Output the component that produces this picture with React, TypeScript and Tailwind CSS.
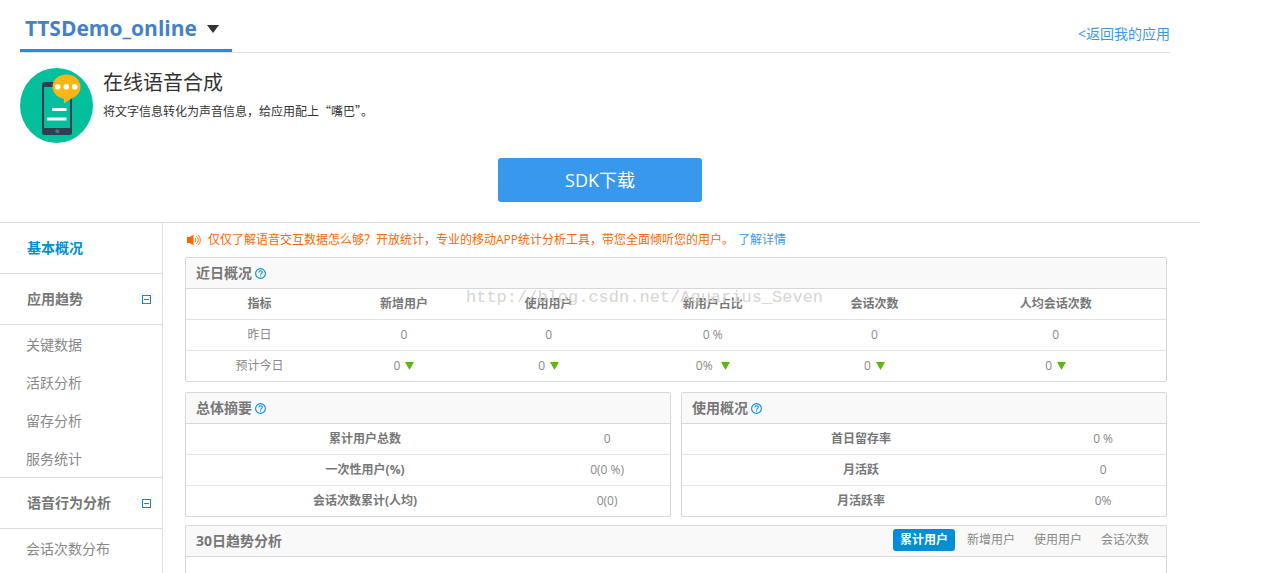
import { useState } from "react";

type Metric = {
  name: string;
  yesterday: string;
  today: string;
};

type SummaryRow = {
  label: string;
  value: string;
};

const metrics: Metric[] = [
  { name: "新增用户", yesterday: "0", today: "0" },
  { name: "使用用户", yesterday: "0", today: "0" },
  { name: "新用户占比", yesterday: "0 %", today: "0% " },
  { name: "会话次数", yesterday: "0", today: "0" },
  { name: "人均会话次数", yesterday: "0", today: "0" },
];

const totals: SummaryRow[] = [
  { label: "累计用户总数", value: "0" },
  { label: "一次性用户(%)", value: "0(0 %)" },
  { label: "会话次数累计(人均)", value: "0(0)" },
];

const usage: SummaryRow[] = [
  { label: "首日留存率", value: "0 %" },
  { label: "月活跃", value: "0" },
  { label: "月活跃率", value: "0%" },
];

const trendItems = ["关键数据", "活跃分析", "留存分析", "服务统计"];
const behaviorItems = ["会话次数分布"];
const trendTabs = ["累计用户", "新增用户", "使用用户", "会话次数"];

function AppLogo() {
  return (
    <svg viewBox="0 0 73 75" className="h-[75px] w-[73px] shrink-0" aria-hidden="true">
      <ellipse cx="36.5" cy="37.5" rx="36.5" ry="37.5" fill="#03bf9c" />
      <rect x="22" y="14" width="30" height="53" rx="2.5" fill="#2f3e50" />
      <rect x="24" y="19" width="26" height="41" fill="#03bf9c" />
      <circle cx="37.3" cy="63.3" r="2" fill="#5d6d7e" />
      <path
        d="M46.5 6.5c7.8 0 14 5.3 14 12.2 0 5.6-3.8 10.1-9 11.7l-7.8 5.1.3-4.8c-6.500-1-11.500-5.800-11.500-12 0-6.900 6.200-12.200 14-12.200z"
        fill="#fdb515"
      />
      <circle cx="37.7" cy="18.7" r="2.8" fill="#fff" />
      <circle cx="46.3" cy="18.7" r="2.8" fill="#fff" />
      <circle cx="54.8" cy="18.7" r="2.8" fill="#fff" />
      <rect x="32" y="40" width="14.5" height="3" fill="#fff" />
      <rect x="27" y="49.5" width="19.5" height="3" fill="#fff" />
    </svg>
  );
}

function SpeakerIcon() {
  return (
    <svg viewBox="0 0 14 12" className="h-3 w-3.5 shrink-0" aria-hidden="true">
      <path d="M0 3h2.500L6.500 0.800v10.400L2.500 9H0z" fill="#ff6600" />
      <path
        d="M8 4c1.300 1 1.300 3 0 4M9.200 2.200c2.600 2 2.600 5.600 0 7.600M10.600 0.700c3.600 3 3.600 7.600 0 10.600"
        fill="none"
        stroke="#ff6600"
        strokeWidth="0.9"
      />
    </svg>
  );
}

function HelpButton({ label }: { label: string }) {
  return (
    <button type="button" aria-label={label} className="ml-[3px]">
      <svg viewBox="0 0 11 11" className="block size-[11px]" fill="none" stroke="#008fd7">
        <circle cx="5.5" cy="5.5" r="4.9" strokeWidth="1.1" />
        <path d="M3.9 4.400c0-2.300 3.400-2.100 3.400-.2 0 1.200-1.700 1.200-1.700 2.500" strokeWidth="1.1" />
        <path d="M5.6 7.500v1.100" strokeWidth="1.2" />
      </svg>
    </button>
  );
}

function DownArrow() {
  return (
    <svg viewBox="0 0 9 8" className="ml-[5px] inline-block h-2 w-[9px] align-baseline" aria-hidden="true">
      <path d="M0 0h9L4.500 8z" fill="#5cb811" />
    </svg>
  );
}

function SideGroup({ title, items }: { title: string; items: string[] }) {
  const [open, setOpen] = useState(true);

  return (
    <div>
      <button
        type="button"
        aria-expanded={open}
        onClick={() => setOpen(!open)}
        className="flex h-[51px] w-full items-center justify-between border-b border-[#ddd] pr-[11px] pl-[27px] text-sm font-bold text-[#777]"
      >
        {title}
        <svg viewBox="0 0 9 9" className="size-[9px] stroke-[#008fd7]" fill="none">
          <rect x="0.5" y="0.5" width="8" height="8" />
          <path d={open ? "M2 4.500h5" : "M2 4.500h5M4.500 2v5"} />
        </svg>
      </button>
      {open ? (
        <ul>
          {items.map((item) => (
            <li key={item}>
              <a href="#" className="block h-[38px] pl-[26px] text-sm leading-10 text-[#888]">
                {item}
              </a>
            </li>
          ))}
        </ul>
      ) : null}
    </div>
  );
}

function PanelTitle({ title }: { title: string }) {
  return (
    <div className="flex h-[31px] items-center border-b border-[#d5d8da] bg-[#f9f9f9] pl-2.5">
      <h2 className="text-sm font-bold text-[#777]">{title}</h2>
      <HelpButton label={`${title}说明`} />
    </div>
  );
}

function SummaryPanel({ title, rows }: { title: string; rows: SummaryRow[] }) {
  return (
    <section className="flex-1 rounded-[2px] border border-[#d5d8da]">
      <PanelTitle title={title} />
      <table className="w-full table-fixed text-center text-xs text-[#888]">
        <tbody className="divide-y divide-[#e3e3e3]">
          {rows.map((row) => (
            <tr key={row.label} className="h-[31px] first:h-[30px]">
              <th scope="row" className="w-[74%] font-bold text-[#777]">
                {row.label}
              </th>
              <td>{row.value}</td>
            </tr>
          ))}
        </tbody>
      </table>
    </section>
  );
}

function RecentPanel() {
  return (
    <section className="relative rounded-[2px] border border-[#d5d8da]">
      <PanelTitle title="近日概况" />
      <table className="w-full table-fixed text-center text-xs text-[#888]">
        <colgroup>
          <col className="w-[15%]" />
          <col className="w-[14.5%]" />
          <col className="w-[15%]" />
          <col className="w-[18.5%]" />
          <col className="w-[14.5%]" />
          <col className="w-[22.5%]" />
        </colgroup>
        <thead>
          <tr className="h-[30px] border-b border-[#e3e3e3] text-[#777]">
            <th scope="col">指标</th>
            {metrics.map((metric) => (
              <th key={metric.name} scope="col">
                {metric.name}
              </th>
            ))}
          </tr>
        </thead>
        <tbody>
          <tr className="h-[31px] border-b border-[#e3e3e3]">
            <td>昨日</td>
            {metrics.map((metric) => (
              <td key={metric.name}>{metric.yesterday}</td>
            ))}
          </tr>
          <tr className="h-[31px]">
            <td>预计今日</td>
            {metrics.map((metric) => (
              <td key={metric.name} className="whitespace-pre">
                {metric.today}
                <DownArrow />
              </td>
            ))}
          </tr>
        </tbody>
      </table>
      <span className="pointer-events-none absolute top-[30px] left-[280px] font-['Liberation_Mono',monospace] text-[17px] leading-5 text-[#d6d6d2]">
        http://blog.csdn.net/Aquarius_Seven
      </span>
    </section>
  );
}

function TrendPanel() {
  const [active, setActive] = useState(trendTabs[0]);

  return (
    <section className="mt-2 flex-1 rounded-t-[2px] border border-b-0 border-[#d5d8da]">
      <div className="flex h-[31px] items-center justify-between border-b border-[#d5d8da] bg-[#f9f9f9] pr-2.5 pl-2.5">
        <h2 className="text-sm font-bold text-[#777]">30日趋势分析</h2>
        <div className="flex gap-[5px] pb-0.5">
          {trendTabs.map((tab) => (
            <button
              key={tab}
              type="button"
              aria-pressed={tab === active}
              onClick={() => setActive(tab)}
              className={
                tab === active
                  ? "h-[22px] rounded-[3px] bg-[#008fd7] px-[7px] text-xs font-bold text-white"
                  : "h-[22px] rounded-[3px] px-[7px] text-xs text-[#888]"
              }
            >
              {tab}
            </button>
          ))}
        </div>
      </div>
    </section>
  );
}

export default function App() {
  return (
    <div
      lang="zh-CN"
      className="flex min-h-screen max-w-[1200px] flex-col bg-white font-['Open_Sans','Noto_Sans_CJK_SC',sans-serif]"
    >
      <header className="mr-[30px] ml-5 flex h-[53px] justify-between border-b border-[#e0e0e0]">
        <button
          type="button"
          className="flex h-[52px] items-center gap-2.5 border-b-[3px] border-[#218de8] pt-2 pr-[13px] pl-[5px] text-[21px] font-bold text-[#4481c8]"
        >
          TTSDemo_online
          <svg viewBox="0 0 12 8" className="h-2 w-3" aria-hidden="true">
            <path d="M0 0h12L6 8z" fill="#333" />
          </svg>
        </button>
        <a href="#" className="pt-6 text-sm text-[#3899ec]">
          &lt;返回我的应用
        </a>
      </header>

      <section className="flex gap-2.5 pt-[15px] pl-5">
        <AppLogo />
        <div className="font-['Noto_Sans_CJK_SC',sans-serif] text-[#333]">
          <h1 className="text-xl leading-7">在线语音合成</h1>
          <p className="mt-1.5 text-xs leading-[18px]">
            将文字信息转化为声音信息，给应用配上“嘴巴”。
          </p>
        </div>
      </section>

      <div className="mt-[15px] mb-5 flex justify-center">
        <button type="button" className="h-11 w-[204px] rounded-[3px] bg-[#3899ec] text-lg text-white">
          SDK下载
        </button>
      </div>

      <div className="flex flex-1 border-t border-[#ddd]">
        <nav className="w-[163px] shrink-0 border-r border-[#ddd]">
          <a
            href="#"
            className="flex h-[51px] items-center border-b border-[#ddd] pl-[27px] text-sm font-bold text-[#008fd7]"
          >
            基本概况
          </a>
          <SideGroup title="应用趋势" items={trendItems} />
          <div className="border-t border-[#ddd]">
            <SideGroup title="语音行为分析" items={behaviorItems} />
          </div>
        </nav>

        <main className="flex min-w-0 flex-1 flex-col pr-[33px] pl-[22px]">
          <p className="flex h-[34px] items-center pl-0.5 text-xs text-[#ff6600]">
            <SpeakerIcon />
            <span className="ml-[7px]">
              仅仅了解语音交互数据怎么够？开放统计，专业的移动APP统计分析工具，带您全面倾听您的用户。
            </span>
            <a href="#" className="ml-1 text-[#3899ec]">
              了解详情
            </a>
          </p>
          <RecentPanel />
          <div className="mt-2.5 flex gap-2.5">
            <SummaryPanel title="总体摘要" rows={totals} />
            <SummaryPanel title="使用概况" rows={usage} />
          </div>
          <TrendPanel />
        </main>
      </div>
    </div>
  );
}
